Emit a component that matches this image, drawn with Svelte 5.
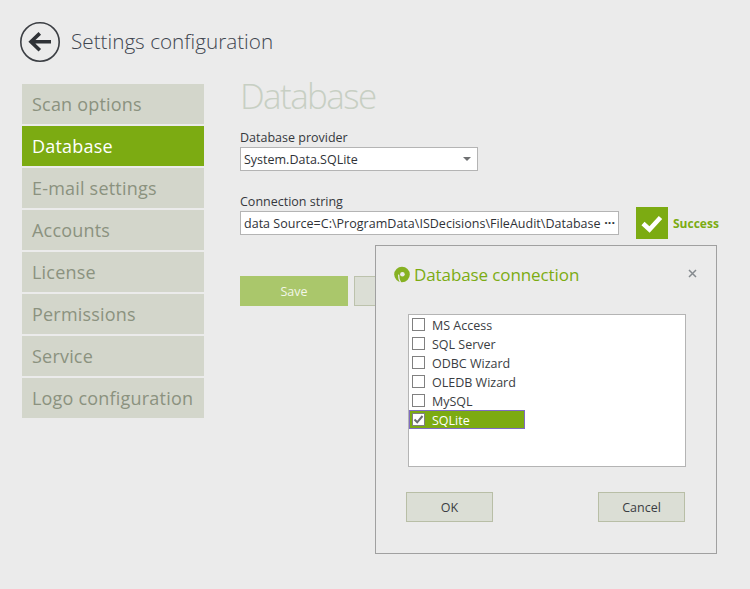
<script lang="ts">
  const sections = [
    'Scan options',
    'Database',
    'E-mail settings',
    'Accounts',
    'License',
    'Permissions',
    'Service',
    'Logo configuration',
  ];
  const active = 'Database';

  const sources = [
    { label: 'MS Access', checked: false },
    { label: 'SQL Server', checked: false },
    { label: 'ODBC Wizard', checked: false },
    { label: 'OLEDB Wizard', checked: false },
    { label: 'MySQL', checked: false },
    { label: 'SQLite', checked: true },
  ];
</script>

<div class="page">
  <header class="top">
    <button class="back" aria-label="Back">
      <svg width="40" height="40" viewBox="0 0 40 40">
        <circle cx="20" cy="20" r="19.2" fill="none" stroke="#3c3f44" stroke-width="1.6" />
        <path d="M31 19.8H12M19.8 11.4L11 19.8L19.8 28.2" fill="none" stroke="#2f3237" stroke-width="3.6" />
      </svg>
    </button>
    <h1>Settings configuration</h1>
  </header>

  <div class="body">
    <nav class="side">
      {#each sections as s}
        <div class="side-item" class:on={s === active}>{s}</div>
      {/each}
    </nav>

    <main class="panel">
      <h2>Database</h2>

      <label class="lbl" for="provider">Database provider</label>
      <div class="select" id="provider">
        <span>System.Data.SQLite</span>
        <i class="caret"></i>
      </div>

      <label class="lbl conn" for="conn">Connection string</label>
      <div class="conn-row">
        <div class="input" id="conn">
          <span class="conn-text">data Source=C:\ProgramData\ISDecisions\FileAudit\Database</span>
          <span class="dots">···</span>
        </div>
        <div class="status">
          <div class="tick">
            <svg width="32" height="32" viewBox="0 0 32 32">
              <path d="M7 16.5L13.5 22.5L24.5 10.5" fill="none" stroke="#fff" stroke-width="4.6" />
            </svg>
          </div>
          <span>Success</span>
        </div>
      </div>

      <div class="actions">
        <button class="save">Save</button>
        <button class="other"></button>
      </div>
    </main>
  </div>

  <div class="modal">
    <div class="modal-head">
      <svg width="17" height="17" viewBox="0 0 17 17">
        <circle cx="9" cy="8.5" r="7.8" fill="#86b122" />
        <circle cx="9.4" cy="8.2" r="2.3" fill="#ebebeb" />
        <path d="M5.6 8.6C5.5 11 5.8 13.5 7.6 16.6" fill="none" stroke="#ebebeb" stroke-width="1.3" />
      </svg>
      <h3>Database connection</h3>
      <svg class="close" width="9" height="9" viewBox="0 0 9 9" aria-label="Close">
        <path d="M1 1L8 8M8 1L1 8" stroke="#858a8e" stroke-width="1.5" />
      </svg>
    </div>

    <div class="list">
      {#each sources as src}
        <div class="row" class:sel={src.checked}>
          <span class="box">
            {#if src.checked}
              <svg width="13" height="13" viewBox="0 0 13 13">
                <path d="M2.5 6.5L5.2 9.3L10.5 3" fill="none" stroke="#6a6c70" stroke-width="2" />
              </svg>
            {/if}
          </span>
          <span class="row-label">{src.label}</span>
        </div>
      {/each}
    </div>

    <div class="modal-actions">
      <button class="plain">OK</button>
      <button class="plain">Cancel</button>
    </div>
  </div>
</div>

<style>
  :global(body) {
    margin: 0;
    background: #ebebeb;
  }

  .page {
    position: relative;
    width: 750px;
    height: 589px;
    overflow: hidden;
    box-sizing: border-box;
    padding: 22px 0 0 20px;
    font-family: "Open Sans", "Noto Sans", sans-serif;
    color: #3a3d42;
  }

  button {
    font-family: inherit;
    cursor: pointer;
  }

  .top {
    display: flex;
    align-items: center;
    gap: 11px;
    height: 40px;
  }
  .back {
    width: 40px;
    height: 40px;
    padding: 0;
    border: none;
    background: none;
  }
  h1 {
    margin: -2px 0 0;
    font-size: 20.7px;
    font-weight: 300;
    color: #3f4650;
  }

  .body {
    display: flex;
    margin: 22px 0 0 2px;
  }

  .side {
    width: 182px;
    display: flex;
    flex-direction: column;
    gap: 2px;
  }
  .side-item {
    height: 40px;
    line-height: 40px;
    padding-left: 10px;
    background: #d3d6cb;
    color: #8b927f;
    font-size: 18px;
    letter-spacing: 0.2px;
  }
  .side-item.on {
    background: #7cab12;
    color: #fff;
  }

  .panel {
    margin-left: 36px;
    width: 490px;
  }
  h2 {
    margin: -8px 0 0;
    font-size: 35px;
    line-height: 40px;
    font-weight: 300;
    color: #c7cfc3;
    letter-spacing: -1.6px;
  }
  .lbl {
    display: block;
    margin-top: 13px;
    font-size: 12.5px;
    line-height: 18px;
    color: #35383d;
  }
  .lbl.conn {
    margin-top: 22px;
  }
  .select,
  .input {
    box-sizing: border-box;
    height: 24px;
    display: flex;
    align-items: center;
    padding: 0 3px;
    background: #fff;
    border: 1px solid #b4b4b4;
    font-size: 12.5px;
    color: #2f3237;
  }
  .select {
    width: 238px;
    justify-content: space-between;
  }
  .caret {
    margin-right: 3px;
    border: 4px solid transparent;
    border-top: 4px solid #6f7072;
    border-bottom: none;
  }

  .conn-row {
    display: flex;
    align-items: center;
    margin-top: -4px;
  }
  .input {
    width: 379px;
    justify-content: space-between;
  }
  .conn-text {
    white-space: nowrap;
    letter-spacing: 0.02px;
  }
  .dots {
    font-weight: 700;
    line-height: 1;
  }
  .status {
    display: flex;
    align-items: center;
    gap: 5px;
    margin-left: 17px;
    font-size: 12px;
    font-weight: 700;
    color: #7cab12;
  }
  .tick {
    width: 32px;
    height: 32px;
    background: #7cab12;
  }

  .actions {
    display: flex;
    gap: 6px;
    margin-top: 37px;
  }
  .actions button {
    width: 108px;
    height: 30px;
    font-size: 12.5px;
  }
  .save {
    border: none;
    background: #aac76b;
    color: #f2f6e8;
  }
  .other {
    border: 1px solid #bcc2ac;
    background: #dbded5;
  }

  .modal {
    position: absolute;
    left: 375px;
    top: 245px;
    box-sizing: border-box;
    width: 342px;
    height: 309px;
    padding: 0 30px;
    background: #ebebeb;
    border: 1px solid #a0a0a0;
  }
  .modal-head {
    display: flex;
    align-items: center;
    gap: 4px;
    height: 56px;
    margin: 0 -6px 0 -13px;
  }
  .modal-head h3 {
    margin: 0;
    flex: 1;
    font-size: 17px;
    font-weight: 400;
    color: #7cab12;
    letter-spacing: -0.1px;
  }
  .close {
    margin: 0 -5px 2px 0;
  }

  .list {
    box-sizing: border-box;
    margin: 12px 0 0 2px;
    width: 278px;
    height: 153px;
    background: #fff;
    border: 1px solid #b4b4b4;
  }
  .row {
    display: flex;
    align-items: center;
    gap: 7px;
    box-sizing: border-box;
    width: 116px;
    height: 19px;
    padding-left: 3px;
    font-size: 12.5px;
    color: #3a3d42;
  }
  .row-label {
    padding-top: 2px;
  }
  .row.sel {
    background: #7cab12;
    color: #fff;
    outline: 1px solid #7f6bc4;
    outline-offset: -1px;
  }
  .box {
    box-sizing: border-box;
    width: 13px;
    height: 13px;
    background: #fff;
    border: 1px solid #808080;
    display: block;
  }
  .box svg {
    display: block;
    margin: -1px;
  }

  .modal-actions {
    display: flex;
    justify-content: space-between;
    margin-top: 25px;
    width: 279px;
  }
  .plain {
    width: 87px;
    height: 30px;
    border: 1px solid #b8bea6;
    background: #dbded5;
    color: #3a3d42;
    font-size: 12.5px;
  }
</style>
